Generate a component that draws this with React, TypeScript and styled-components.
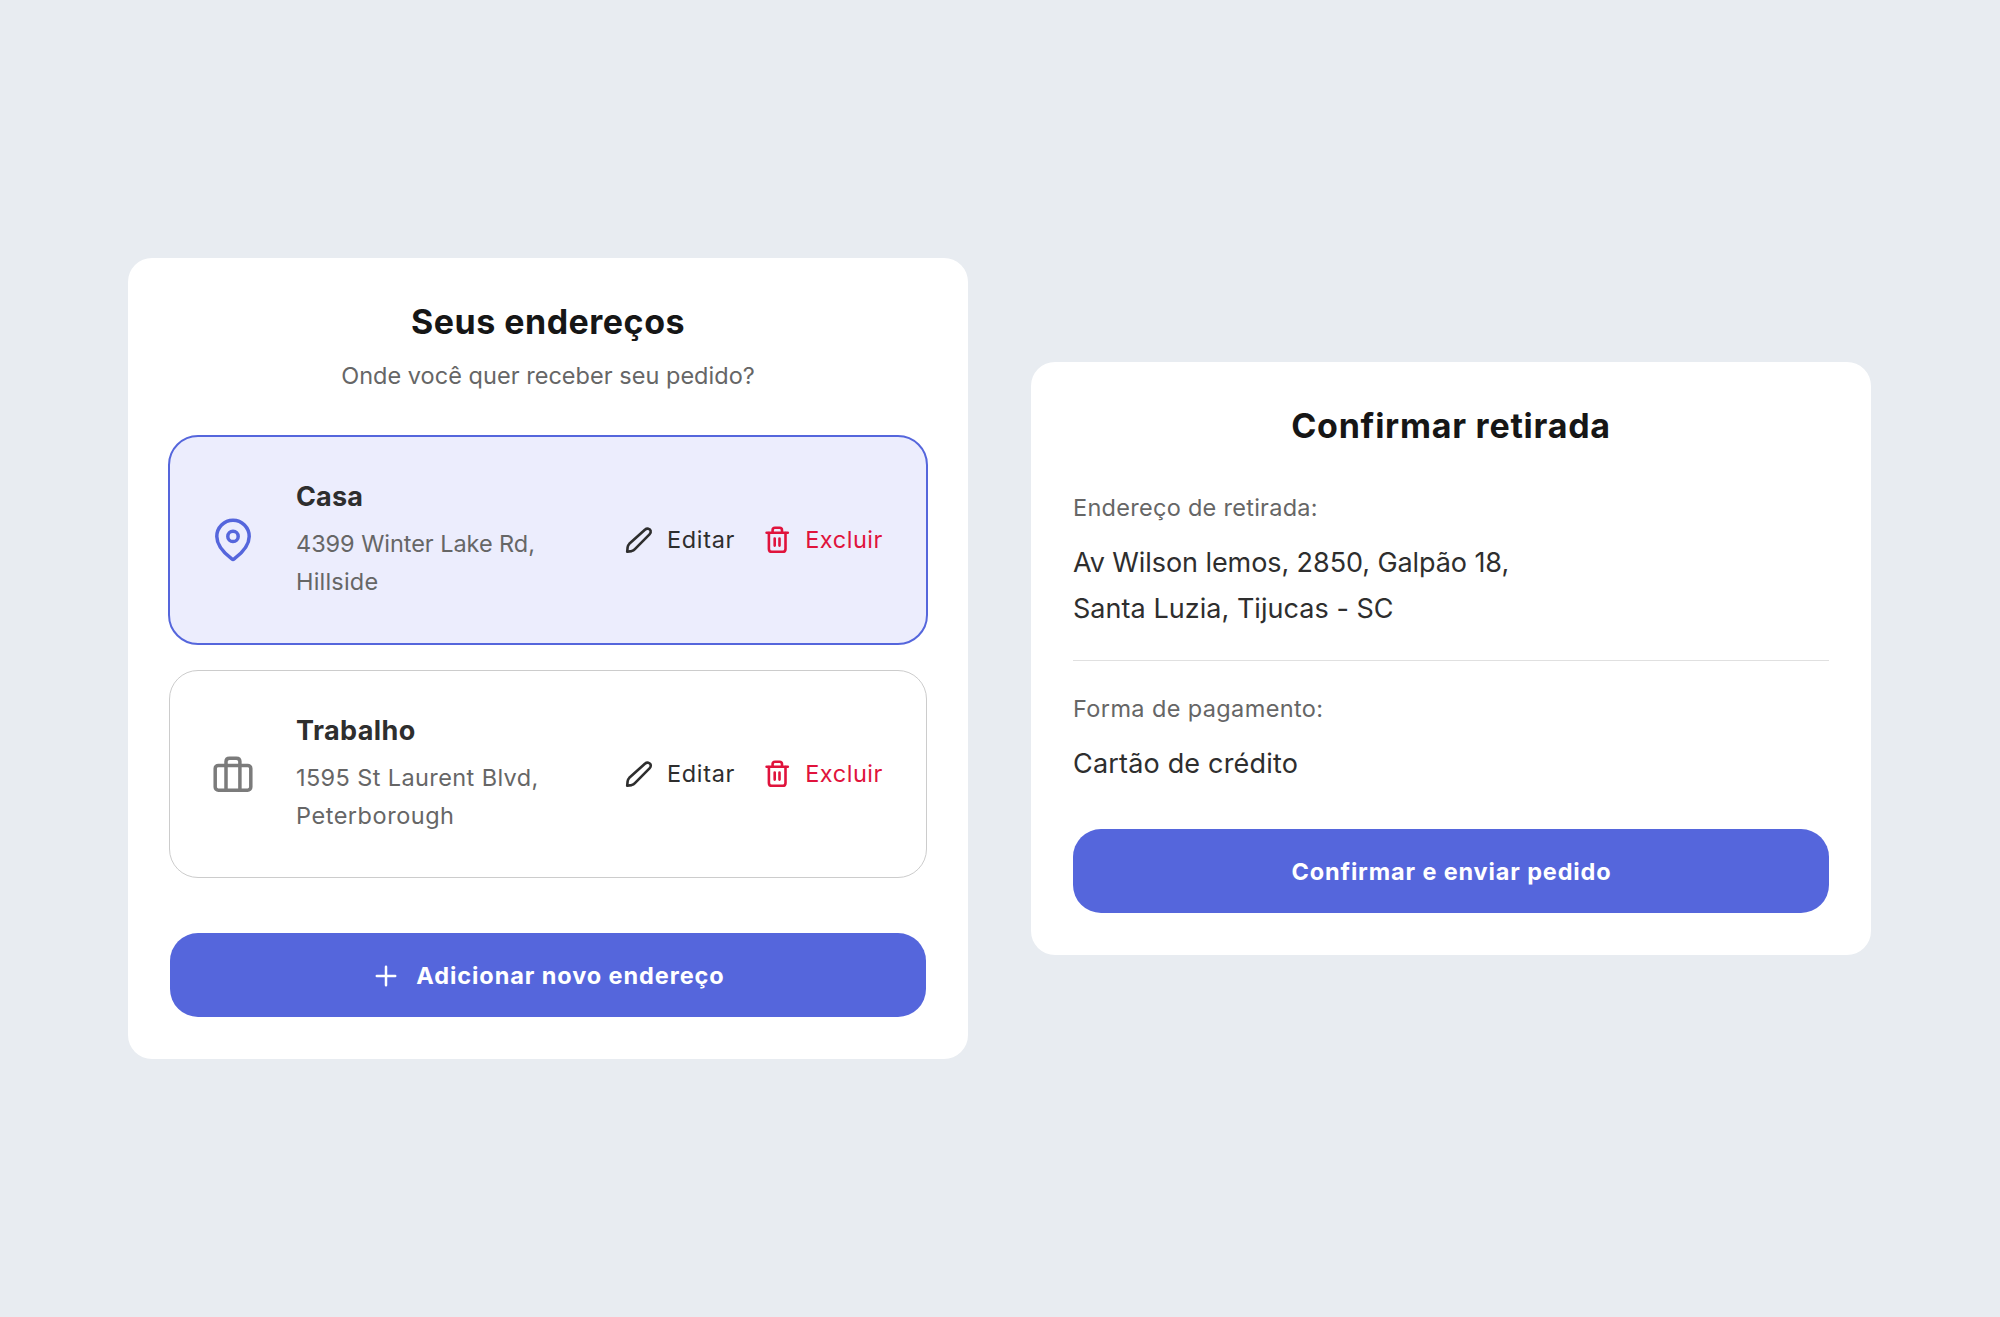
import React from "react";
import styled, { createGlobalStyle, css } from "styled-components";

const color = {
  page: "#e8ecf1",
  card: "#ffffff",
  primary: "#5566dc",
  primarySoft: "#ecedfd",
  heading: "#161616",
  text: "#2e2e2e",
  muted: "#666666",
  icon: "#7b7b7b",
  danger: "#e0133c",
  border: "#cccccc",
  divider: "#e0e0e0",
};

const GlobalStyle = createGlobalStyle`
  *, *::before, *::after { box-sizing: border-box; }
  body {
    margin: 0;
    background: ${color.page};
    font-family: Inter, Roboto, sans-serif;
    font-kerning: normal;
  }
  h2, h3, p, hr { margin: 0; }
`;

const Page = styled.main`
  height: 1317px;
  display: flex;
  align-items: center;
  gap: 63px;
  padding-left: 128px;
  background: ${color.page};
`;

const Card = styled.section<{ $height: number }>`
  display: flex;
  flex-direction: column;
  width: 840px;
  height: ${(p) => p.$height}px;
  padding: 42px;
  border-radius: 24px;
  background: ${color.card};
`;

const tracked = css<{ $tracking?: number }>`
  letter-spacing: ${(p) => p.$tracking ?? 0}px;
  white-space: nowrap;
`;

const Title = styled.h2<{ $tracking?: number }>`
  ${tracked}
  color: ${color.heading};
  font-size: 34px;
  font-weight: 680;
  line-height: 43px;
  text-align: center;
`;

const Subtitle = styled.p<{ $tracking?: number }>`
  ${tracked}
  margin-top: 14px;
  color: ${color.muted};
  font-size: 23.5px;
  line-height: 38px;
  text-align: center;
`;

const AddressList = styled.div`
  display: flex;
  flex-direction: column;
  gap: 25px;
  margin: 40px -2px 0;
`;

const AddressItem = styled.article<{ $selected?: boolean }>`
  display: flex;
  align-items: center;
  border-style: solid;
  ${(p) =>
    p.$selected
      ? css`
          height: 210px;
          padding: 0 43px 0 42px;
          border-width: 2px;
          border-color: ${color.primary};
          border-radius: 30px;
          background: ${color.primarySoft};
        `
      : css`
          height: 208px;
          margin: 0 1px;
          padding: 0 43px 0 42px;
          border-width: 1px;
          border-color: ${color.border};
          border-radius: 29px;
          background: ${color.card};
        `}
`;

const AddressIcon = styled.span<{ $selected?: boolean }>`
  display: flex;
  flex: none;
  width: 42px;
  height: 42px;
  margin-right: 42px;
  color: ${(p) => (p.$selected ? color.primary : color.icon)};
`;

const AddressBody = styled.div`
  flex: 1;
  padding-top: 1px;
`;

const AddressName = styled.h3<{ $tracking?: number }>`
  ${tracked}
  color: ${color.text};
  font-size: 27px;
  font-weight: 680;
  line-height: 36px;
`;

const AddressLines = styled.p`
  display: flex;
  flex-direction: column;
  margin-top: 9.6px;
`;

const AddressLine = styled.span<{ $tracking?: number }>`
  ${tracked}
  color: ${color.muted};
  font-size: 23.5px;
  line-height: 38.4px;
`;

const Actions = styled.div`
  display: flex;
  align-items: center;
  gap: 28px;
`;

const Action = styled.button<{ $danger?: boolean; $tracking?: number }>`
  ${tracked}
  display: flex;
  align-items: center;
  gap: 14px;
  padding: 0;
  border: 0;
  background: none;
  color: ${(p) => (p.$danger ? color.danger : color.text)};
  font-family: inherit;
  font-size: 23.5px;
  line-height: 38px;
`;

const PrimaryButton = styled.button<{ $tracking?: number }>`
  ${tracked}
  display: flex;
  align-items: center;
  justify-content: center;
  gap: 16px;
  flex: none;
  height: 84px;
  margin-top: auto;
  padding: 2px 0 0 1px;
  border: 0;
  border-radius: 28px;
  background: ${color.primary};
  color: #ffffff;
  font-family: inherit;
  font-size: 23.5px;
  font-weight: 660;
  line-height: 38px;
`;

const Field = styled.div<{ $top: number }>`
  display: flex;
  flex-direction: column;
  padding-top: ${(p) => p.$top}px;
`;

const FieldLabel = styled.span<{ $tracking?: number }>`
  ${tracked}
  margin-bottom: 13px;
  color: ${color.muted};
  font-size: 23.5px;
  line-height: 38px;
`;

const FieldValue = styled.span<{ $tracking?: number }>`
  ${tracked}
  color: ${color.text};
  font-size: 27px;
  line-height: 46px;
`;

const Divider = styled.hr`
  flex: none;
  height: 1px;
  margin-top: 28px;
  border: 0;
  background: ${color.divider};
`;

const Svg = styled.svg<{ $size: number; $stroke: number }>`
  flex: none;
  width: ${(p) => p.$size}px;
  height: ${(p) => p.$size}px;
  overflow: visible;
  fill: none;
  stroke: currentColor;
  stroke-width: ${(p) => p.$stroke};
  stroke-linecap: round;
  stroke-linejoin: round;
`;

const PinIcon = () => (
  <Svg viewBox="0 0 42 42" $size={42} $stroke={3.5}>
    <path d="M37.2 17.4C37.2 28.4 26.8 36.4 22.2 39.9Q21 40.8 19.8 39.9C15.2 36.4 4.8 28.4 4.8 17.4a16.2 16.2 0 0 1 32.4 0Z" />
    <circle cx="21" cy="17.4" r="5.2" />
  </Svg>
);

const BriefcaseIcon = () => (
  <Svg viewBox="0 0 42 42" $size={42} $stroke={3.5}>
    <rect x="3.2" y="12.4" width="35.6" height="24.9" rx="3.2" />
    <path d="M14 37V8.6Q14 5.2 17.5 5.2H24.4Q27.9 5.2 27.9 8.6V37" />
  </Svg>
);

const PencilIcon = () => (
  <Svg viewBox="0 0 28 28" $size={28} $stroke={2.6}>
    <path d="M2.2 25.8L2.6 21.4Q2.8 19.3 4.3 17.8L19.9 3.7C22.2 1.7 25 2.6 25.6 4.7C26 6.1 25.6 7.3 24.5 8.4L9.9 23.1Q8.5 24.6 6.6 25.1Z" />
  </Svg>
);

const TrashIcon = () => (
  <Svg viewBox="0 0 28 28" $size={28} $stroke={2.6}>
    <path d="M3.6 6.8H24.8" />
    <path d="M9.6 6.5V4.2Q9.6 1.8 12 1.8H16.6Q19 1.8 19 4.2V6.5" />
    <path d="M5.9 7V22.9Q5.9 25.8 8.8 25.8H19.6Q22.5 25.8 22.5 22.9V7" />
    <path d="M11.7 12.6V19.6M16.5 12.6V19.6" />
  </Svg>
);

const PlusIcon = () => (
  <Svg viewBox="0 0 28 28" $size={28} $stroke={2.5}>
    <path d="M14 4.8V23.2M4.8 14H23.2" />
  </Svg>
);

interface Line {
  text: string;
  tracking: number;
}

interface Address {
  name: Line;
  lines: Line[];
  icon: React.ReactNode;
  selected?: boolean;
}

const addresses: Address[] = [
  {
    name: { text: "Casa", tracking: 0.15 },
    lines: [
      { text: "4399 Winter Lake Rd,", tracking: -0.05 },
      { text: "Hillside", tracking: 0.2 },
    ],
    icon: <PinIcon />,
    selected: true,
  },
  {
    name: { text: "Trabalho", tracking: 0.4 },
    lines: [
      { text: "1595 St Laurent Blvd,", tracking: 0.39 },
      { text: "Peterborough", tracking: 0.53 },
    ],
    icon: <BriefcaseIcon />,
  },
];

const AddressRow = ({ name, lines, icon, selected }: Address) => (
  <AddressItem $selected={selected}>
    <AddressIcon $selected={selected}>{icon}</AddressIcon>
    <AddressBody>
      <AddressName $tracking={name.tracking}>{name.text}</AddressName>
      <AddressLines>
        {lines.map((line) => (
          <AddressLine key={line.text} $tracking={line.tracking}>
            {line.text}
          </AddressLine>
        ))}
      </AddressLines>
    </AddressBody>
    <Actions>
      <Action $tracking={0.7}>
        <PencilIcon />
        Editar
      </Action>
      <Action $danger $tracking={0.55}>
        <TrashIcon />
        Excluir
      </Action>
    </Actions>
  </AddressItem>
);

export default function App() {
  return (
    <>
      <GlobalStyle />
      <Page>
        <Card $height={801}>
          <Title $tracking={0.5}>Seus endereços</Title>
          <Subtitle $tracking={0.03}>Onde você quer receber seu pedido?</Subtitle>
          <AddressList>
            {addresses.map((address) => (
              <AddressRow key={address.name.text} {...address} />
            ))}
          </AddressList>
          <PrimaryButton $tracking={0.92}>
            <PlusIcon />
            Adicionar novo endereço
          </PrimaryButton>
        </Card>

        <Card $height={593}>
          <Title $tracking={0.75}>Confirmar retirada</Title>
          <Field $top={42}>
            <FieldLabel $tracking={0.28}>Endereço de retirada:</FieldLabel>
            <FieldValue $tracking={-0.08}>Av Wilson lemos, 2850, Galpão 18,</FieldValue>
            <FieldValue $tracking={0.04}>Santa Luzia, Tijucas - SC</FieldValue>
          </Field>
          <Divider />
          <Field $top={29}>
            <FieldLabel $tracking={0.38}>Forma de pagamento:</FieldLabel>
            <FieldValue $tracking={0.18}>Cartão de crédito</FieldValue>
          </Field>
          <PrimaryButton $tracking={0.86}>Confirmar e enviar pedido</PrimaryButton>
        </Card>
      </Page>
    </>
  );
}
